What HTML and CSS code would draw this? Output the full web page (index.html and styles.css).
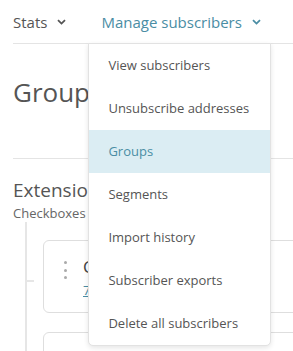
FILE: index.html
```html
<!DOCTYPE html>
<html lang="en">
<head>
    <meta charset="UTF-8">
    <meta name="viewport" content="width=device-width, initial-scale=1.0">
    <title>Groups</title>
    <link rel="stylesheet" href="styles.css">
</head>
<body>
    <div class="wrap">
        <nav class="topnav">
            <div class="nav-item">
                Stats
                <svg class="chevron" width="9" height="6" viewBox="0 0 9 6"><path d="M1 1.2 L4.5 4.6 L8 1.2" /></svg>
            </div>
            <div class="nav-item active">
                Manage subscribers
                <svg class="chevron" width="9" height="6" viewBox="0 0 9 6"><path d="M1 1.2 L4.5 4.6 L8 1.2" /></svg>
                <ul class="dropdown">
                    <li>View subscribers</li>
                    <li>Unsubscribe addresses</li>
                    <li class="current">Groups</li>
                    <li>Segments</li>
                    <li>Import history</li>
                    <li>Subscriber exports</li>
                    <li>Delete all subscribers</li>
                </ul>
            </div>
        </nav>

        <div class="page-head">
            <h1>Groups</h1>
        </div>

        <section class="group-section">
            <h2>Extension</h2>
            <p class="sub">Checkboxes</p>
            <div class="tree">
                <div class="card">
                    <div class="drag">
                        <span></span><span></span><span></span>
                    </div>
                    <div class="card-body">
                        <div class="card-title">Consent</div>
                        <a href="#" class="card-link">7 subs</a>
                    </div>
                </div>
                <div class="card"></div>
            </div>
        </section>
    </div>
</body>
</html>
```
FILE: styles.css
```css
body {
    margin: 0;
    font-family: "Open Sans", "DejaVu Sans", sans-serif;
    color: #555;
    background-color: #fff;
    overflow: hidden;
}
.wrap {
    width: 700px;
    padding-left: 13px;
}
.topnav {
    height: 43px;
    display: flex;
    border-bottom: 1px solid #e4e4e4;
    font-size: 15px;
}
.nav-item {
    position: relative;
    display: flex;
    align-items: center;
    gap: 10px;
    margin-right: 35px;
    color: #555;
}
.nav-item.active {
    color: #4a8da4;
    gap: 10px;
}
.chevron path {
    fill: none;
    stroke: currentColor;
    stroke-width: 1.8;
}
.dropdown {
    position: absolute;
    left: -13px;
    top: 43px;
    width: 183px;
    box-sizing: border-box;
    margin: 0;
    padding: 0;
    list-style: none;
    background-color: white;
    border: 1px solid #e2e2e2;
    border-radius: 0 0 5px 5px;
    box-shadow: 0 2px 5px rgba(0, 0, 0, 0.1);
    z-index: 2;
}
.dropdown li {
    height: 43px;
    line-height: 43px;
    padding-left: 19px;
    font-size: 13px;
    color: #555;
    white-space: nowrap;
}
.dropdown li.current {
    background-color: #dbedf3;
    color: #4a8da4;
}
.page-head {
    padding-bottom: 47px;
    border-bottom: 1px solid #e4e4e4;
}
h1 {
    margin: 29px 0 0;
    font-size: 26px;
    line-height: 38px;
    font-weight: 400;
    color: #555;
}
.group-section h2 {
    margin: 18px 0 0;
    font-size: 19px;
    line-height: 26px;
    font-weight: 400;
    color: #555;
}
.sub {
    margin: 1px 0 0;
    font-size: 13px;
    line-height: 18px;
    color: #666;
}
.tree {
    margin-left: 12px;
    padding-top: 18px;
    border-left: 2px solid #e6e6e6;
}
.card {
    position: relative;
    display: flex;
    width: 500px;
    height: 73px;
    box-sizing: border-box;
    margin-left: 16px;
    margin-bottom: 19px;
    padding: 14px 0 0 20px;
    border: 1px solid #dedede;
    border-radius: 6px;
    background-color: white;
}
.card::before {
    content: "";
    position: absolute;
    left: -18px;
    top: 39px;
    width: 8px;
    height: 2px;
    background-color: #e6e6e6;
}
.drag {
    display: flex;
    flex-direction: column;
    gap: 4.5px;
    margin-top: 6px;
    width: 3px;
}
.drag span {
    width: 3px;
    height: 3px;
    border-radius: 50%;
    background-color: #aaa;
}
.card-body {
    margin-left: 16px;
}
.card-title {
    font-size: 17px;
    line-height: 23px;
    color: #444;
}
.card-link {
    font-size: 13px;
    line-height: 18px;
    color: #4a8da4;
}
```
